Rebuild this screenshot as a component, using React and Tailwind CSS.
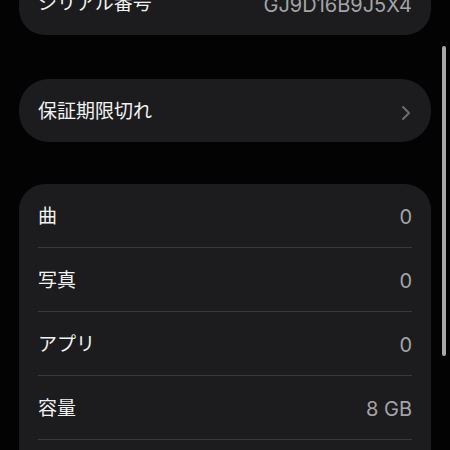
import React from "react";

const font = { fontFamily: '"Inter", "Noto Sans CJK JP", sans-serif' };

function Chevron() {
  return (
    <svg width="10" height="16" viewBox="0 0 10 16" className="mr-[1px] mt-[2px]">
      <path d="M2 2 L8 8 L2 14" fill="none" stroke="#6c6c70" strokeWidth="2" strokeLinecap="round" strokeLinejoin="round" />
    </svg>
  );
}

function Row({ label, value, divider = true }) {
  return (
    <div className="px-[19px]">
      <div className={`flex h-[64px] items-center justify-between pt-[3px] ${divider ? "border-b border-[#38383a]" : ""}`}>
        <span className="text-[19px] text-[#f2f2f2]">{label}</span>
        <span className="text-[20px] text-[#a4a4a8]">{value}</span>
      </div>
    </div>
  );
}

export default function App() {
  return (
    <div className="relative h-[450px] w-[450px] overflow-hidden bg-[#030303]" style={font}>
      <div className="mx-[19px] mt-[-29px] flex w-[412px] flex-col">
        <div className="overflow-hidden rounded-[26px] bg-[#1c1c1e]">
          <div className="flex h-[64px] items-center justify-between px-[19px] pt-[3px]">
            <span className="text-[19px] text-[#f2f2f2]">シリアル番号</span>
            <span className="text-[20px] text-[#a4a4a8]">GJ9D16B9J5X4</span>
          </div>
        </div>
        <div className="mt-[44px] rounded-[30px] bg-[#1c1c1e]">
          <div className="flex h-[63px] items-center justify-between px-[19px] pt-[3px]">
            <span className="text-[19px] text-[#f2f2f2]">保証期限切れ</span>
            <Chevron />
          </div>
        </div>
        <div className="mt-[42px] rounded-[26px] bg-[#1c1c1e]">
          <Row label="曲" value="0" />
          <Row label="写真" value="0" />
          <Row label="アプリ" value="0" />
          <Row label="容量" value="8 GB" />
          <Row label="使用可能" value="7 GB" divider={false} />
        </div>
      </div>
      <div className="absolute left-[442px] top-[46px] h-[310px] w-[4px] rounded-full bg-[#a8a8a8]" />
    </div>
  );
}
